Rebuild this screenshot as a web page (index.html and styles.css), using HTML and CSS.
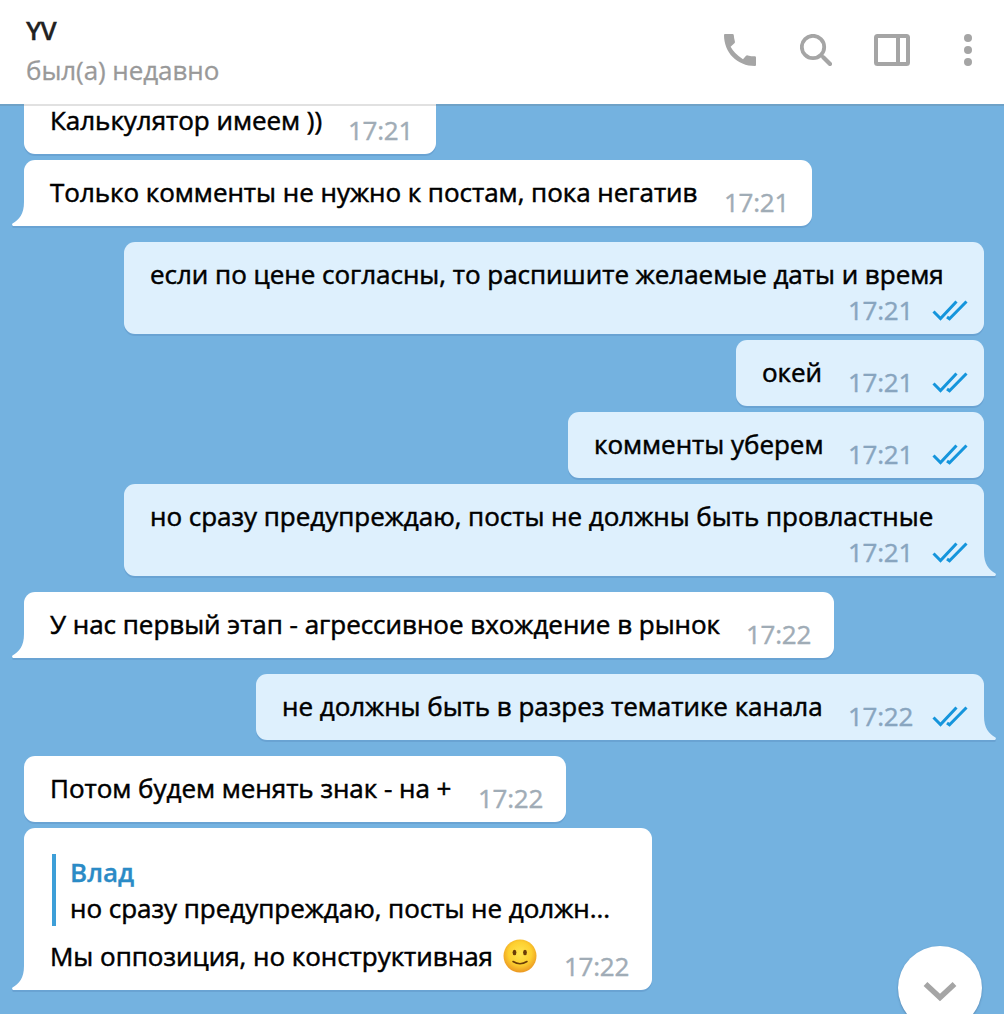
FILE: index.html
```html
<!DOCTYPE html>
<html lang="ru">
<head>
    <meta charset="UTF-8">
    <meta name="viewport" content="width=device-width, initial-scale=1.0">
    <title>YV</title>
    <link rel="stylesheet" href="styles.css">
</head>
<body>

    <svg class="defs" width="0" height="0">
        <symbol id="checks" viewBox="0 0 36 22">
            <path d="M1.500 11.500 L8.500 18.500 L24.500 1.500 M15 17 L17.500 18.800 L34.500 1.500" fill="none" stroke="#1595dc" stroke-width="3"/>
        </symbol>
        <symbol id="tail" viewBox="0 0 12 24">
            <path d="M12 0 C12 12 7 18 0.500 21.500 Q-0.500 23 1 24 L12 24 Z"/>
        </symbol>
    </svg>

    <header class="header">
        <div class="peer">
            <div class="peer-name">YV</div>
            <div class="peer-status">был(а) недавно</div>
        </div>
        <div class="actions">
            <svg width="32" height="32" viewBox="0 0 32 32">
                <path d="M0 1 Q0 0 1 0 H8.500 Q9.700 0 9.800 1.200 Q10 4.500 10.900 7.400 Q11.200 8.600 10.400 9.300 L6.600 12.800 Q10.500 20 19 25.200 L21.800 22 Q22.600 21.100 23.800 21.400 Q27.200 22.200 30.800 22.300 Q32 22.400 32 23.500 V31 Q32 32 31 32 C13 32 0 18.500 0 1 Z" fill="#a5a5a5"/>
            </svg>
            <svg width="32" height="32" viewBox="0 0 32 32" fill="none" stroke="#a5a5a5">
                <circle cx="13" cy="13" r="11.200" stroke-width="3.800"/>
                <path d="M21 21 L23 23" stroke-width="3"/>
                <path d="M23.500 23.500 L30 30" stroke-width="4.200" stroke-linecap="round"/>
            </svg>
            <svg width="36" height="32" viewBox="0 0 36 32" fill="none" stroke="#a5a5a5" stroke-width="4">
                <rect x="2" y="2" width="32" height="28" rx="1.500"/>
                <path d="M24 2 V30"/>
            </svg>
            <svg width="8" height="32" viewBox="0 0 8 32" fill="#a5a5a5">
                <circle cx="4" cy="4" r="4"/>
                <circle cx="4" cy="16" r="4"/>
                <circle cx="4" cy="28" r="4"/>
            </svg>
        </div>
    </header>

    <main class="chat">
        <div class="msg in m1">
            <span class="text">Калькулятор имеем ))</span>
            <span class="meta">17:21</span>
        </div>
        <div class="msg in last m2">
            <span class="text">Только комменты не нужно к постам, пока негатив</span>
            <span class="meta">17:21</span>
            <svg class="tail"><use href="#tail"/></svg>
        </div>

        <div class="msg out tall m3">
            <span class="text">если по цене согласны, то распишите желаемые даты и время</span>
            <span class="meta">17:21 <svg class="checks"><use href="#checks"/></svg></span>
        </div>
        <div class="msg out m4">
            <span class="text">окей</span>
            <span class="meta">17:21 <svg class="checks"><use href="#checks"/></svg></span>
        </div>
        <div class="msg out m5">
            <span class="text">комменты уберем</span>
            <span class="meta">17:21 <svg class="checks"><use href="#checks"/></svg></span>
        </div>
        <div class="msg out tall last m6">
            <span class="text">но сразу предупреждаю, посты не должны быть провластные</span>
            <span class="meta">17:21 <svg class="checks"><use href="#checks"/></svg></span>
            <svg class="tail"><use href="#tail"/></svg>
        </div>

        <div class="msg in last m7">
            <span class="text">У нас первый этап - агрессивное вхождение в рынок</span>
            <span class="meta">17:22</span>
            <svg class="tail"><use href="#tail"/></svg>
        </div>

        <div class="msg out last m8">
            <span class="text">не должны быть в разрез тематике канала</span>
            <span class="meta">17:22 <svg class="checks"><use href="#checks"/></svg></span>
            <svg class="tail"><use href="#tail"/></svg>
        </div>

        <div class="msg in m9">
            <span class="text">Потом будем менять знак - на +</span>
            <span class="meta">17:22</span>
        </div>
        <div class="msg in last with-reply m10">
            <div class="reply">
                <div class="reply-name">Влад</div>
                <div class="reply-text">но сразу предупреждаю, посты не должн...</div>
            </div>
            <div class="line">
                <span class="text">Мы оппозиция, но конструктивная</span>
                <svg class="emoji" viewBox="0 0 34 34">
                    <defs>
                        <radialGradient id="face" cx="50%" cy="42%" r="58%">
                            <stop offset="0" stop-color="#ffe54f"/>
                            <stop offset="0.6" stop-color="#fdd030"/>
                            <stop offset="1" stop-color="#eb9722"/>
                        </radialGradient>
                    </defs>
                    <circle cx="17" cy="17" r="16.500" fill="url(#face)"/>
                    <ellipse cx="11.500" cy="13.500" rx="1.900" ry="2.700" fill="#6b3d08"/>
                    <ellipse cx="22" cy="13.500" rx="1.900" ry="2.700" fill="#6b3d08"/>
                    <path d="M10 22.500 Q17 27 24 22.500" fill="none" stroke="#6b3d08" stroke-width="1.500" stroke-linecap="round"/>
                </svg>
                <span class="meta">17:22</span>
            </div>
            <svg class="tail"><use href="#tail"/></svg>
        </div>

        <button class="scroll-down" aria-label="Вниз">
            <svg width="34" height="22" viewBox="0 0 34 22">
                <path d="M2.500 3 L17 16.500 L31.500 3" fill="none" stroke="#a5a5a5" stroke-width="5.500"/>
            </svg>
        </button>
    </main>

</body>
</html>
```

FILE: styles.css
```css
body {
    font-family: "Open Sans", "Noto Sans", sans-serif;
    font-size: 26px;
    line-height: 36px;
    margin: 0;
    height: 1014px;
    overflow: hidden;
    color: #000;
}
.defs {
    position: absolute;
}
.header {
    display: flex;
    justify-content: space-between;
    box-sizing: border-box;
    height: 104px;
    padding: 12px 32px 0 26px;
    background-color: #fff;
}
.peer-name {
    font-weight: 600;
    color: #222;
    letter-spacing: -0.8px;
    -webkit-text-stroke: 0.3px;
}
.peer-status {
    margin-top: 4px;
    color: #999;
    letter-spacing: -0.08px;
    -webkit-text-stroke: 0.3px;
}
.actions {
    display: flex;
    gap: 44px;
    padding-top: 22px;
}
.actions svg:nth-child(3) {
    margin: 0 10px 0 -2px;
}
.chat {
    position: relative;
    display: flex;
    flex-direction: column;
    align-items: flex-start;
    gap: 6px;
    box-sizing: border-box;
    height: 910px;
    padding: 0 20px 0 24px;
    overflow: hidden;
    background-color: #74b2e0;
}
.chat::before {
    content: "";
    position: absolute;
    top: 0;
    left: 0;
    right: 0;
    height: 2px;
    z-index: 1;
    background-color: rgba(90, 90, 90, 0.18);
}
.msg {
    position: relative;
    display: flex;
    flex-shrink: 0;
    justify-content: space-between;
    box-sizing: border-box;
    height: 66px;
    padding: 14px 24px 0 26px;
    border-radius: 11px;
    white-space: nowrap;
    box-shadow: 0 2px 0 #69a3d3;
}
.in {
    background-color: #fff;
    color: #000;
}
.out {
    align-self: flex-end;
    padding-right: 16px;
    background-color: #def0fd;
}
.in.last {
    border-bottom-left-radius: 0;
    margin-bottom: 10px;
}
.out.last {
    border-bottom-right-radius: 0;
    margin-bottom: 10px;
}
.text,
.reply-text {
    letter-spacing: -0.03px;
    -webkit-text-stroke: 0.5px;
}
.meta {
    display: flex;
    margin-right: -1px;
    padding-top: 10px;
    color: #a0acb6;
    letter-spacing: -0.25px;
    -webkit-text-stroke: 0.4px;
}
.out .meta {
    margin-right: 0;
    color: #88a5bf;
}
.checks {
    width: 36px;
    height: 22px;
    margin: 8px 0 0 19px;
}
.tall {
    flex-direction: column;
    justify-content: flex-start;
    height: 92px;
}
.tall .meta {
    align-self: flex-end;
    padding-top: 0;
}
.tail {
    position: absolute;
    bottom: 0;
    left: -12px;
    width: 12px;
    height: 24px;
    fill: #fff;
    filter: drop-shadow(0 2px 0 #69a3d3);
}
.out .tail {
    left: auto;
    right: -12px;
    fill: #def0fd;
    transform: scaleX(-1);
}
.m1 {
    width: 412px;
    margin-top: -16px;
}
.m2 {
    width: 788px;
}
.m3,
.m6 {
    width: 860px;
}
.m4 {
    width: 248px;
}
.m5 {
    width: 416px;
}
.m7 {
    width: 810px;
}
.m8 {
    width: 728px;
}
.m9 {
    width: 542px;
}
.m10 {
    width: 628px;
}
.with-reply {
    flex-direction: column;
    justify-content: flex-start;
    height: 162px;
    padding-top: 26px;
}
.reply {
    height: 72px;
    margin-left: 2px;
    padding-left: 14px;
    border-left: 4px solid #3d9fd8;
}
.reply-name {
    font-weight: 600;
    color: #2b8bc6;
    -webkit-text-stroke: 0.3px;
}
.line {
    display: flex;
    margin-top: 12px;
}
.emoji {
    width: 34px;
    height: 34px;
    margin: 1px 0 0 10px;
}
.line .meta {
    margin-left: auto;
}
.scroll-down {
    position: absolute;
    left: 898px;
    top: 842px;
    width: 84px;
    height: 84px;
    padding: 11px 0 0;
    border: none;
    border-radius: 50%;
    background-color: #fff;
    box-shadow: 0 1px 2px rgba(60, 100, 140, 0.6);
}
```
